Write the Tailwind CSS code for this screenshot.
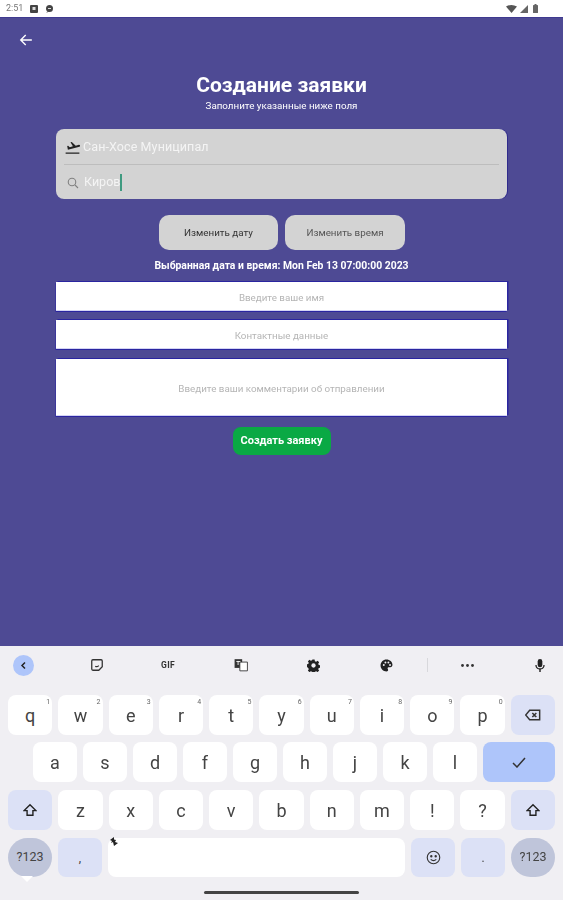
<!DOCTYPE html>
<html lang="ru">
<head>
<meta charset="UTF-8">
<title>Создание заявки</title>
<script src="https://cdn.jsdelivr.net/npm/@tailwindcss/browser@4"></script>
</head>
<body class="h-[900px] w-[563px] overflow-hidden bg-[#f0eff3] font-['Roboto',sans-serif] blur-[0.4px]">
    <!-- Status bar -->
    <div class="flex h-[17px] items-center justify-between bg-white pl-[6px] pr-[25px]">
        <div class="flex items-center gap-[7px]">
            <span class="text-[9px] text-[#777]">2:51</span>
            <svg class="w-[8px] h-[8px]" viewBox="0 0 8 8"><rect width="8" height="8" rx="1" fill="#444"/><rect x="2.5" y="2" width="3" height="3" fill="#ddd"/></svg>
            <svg class="w-[9px] h-[8px]" viewBox="0 0 9 8"><circle cx="4.5" cy="3.5" r="3.5" fill="#444"/><path d="M1 8l2-2h2z" fill="#444"/><rect x="3" y="3" width="3" height="1" fill="#ddd"/></svg>
        </div>
        <div class="flex items-center gap-[3px]">
            <svg class="w-[11px] h-[8px]" viewBox="0 0 11 8"><path d="M0 1.5Q5.5-1.5 11 1.5L5.5 8z" fill="#555"/></svg>
            <svg class="w-[8px] h-[8px]" viewBox="0 0 8 8"><path d="M8 0v8H0z" fill="#666"/></svg>
            <svg class="ml-[2px] w-[5px] h-[9px]" viewBox="0 0 5 9"><rect y="1" width="5" height="8" rx=".6" fill="#666"/><rect x="1.5" width="2" height="1" fill="#666"/></svg>
        </div>
    </div>

    <!-- Form screen -->
    <div class="h-[629px] border-t border-[#3f3a90] bg-[#4e4a94]">
        <div class="pl-[19px] pt-[15px]">
            <svg class="w-[14px] h-[14px] block" viewBox="0 0 24 24" fill="none" stroke="white" stroke-width="2.4"><path d="M22 12H3M11.5 3.5 3 12l8.5 8.5"/></svg>
        </div>
        <h1 class="mt-[25px] text-center text-[21px] leading-[26px] font-bold text-white">Создание заявки</h1>
        <p class="mt-[2px] text-center text-[9.8px] leading-[12px] text-white">Заполните указанные ниже поля</p>

        <div class="mx-[56px] mt-[17px] h-[70px] rounded-[8px] bg-[#d3d3d3] px-[8px] shadow-[1px_0_0_#2f2a8c]">
            <div class="flex h-[36px] items-center border-b border-[#bdbdbd] pt-[2px]">
                <svg class="ml-[1px] w-[15px] h-[15px]" viewBox="0 0 24 24" fill="#222"><path d="M1 20h22v2H1zM3.5 9.5l1.5-.4 2.6 2.3 5-1.3-3.8-6.6 2-.5 6.4 6 5-1.3c.9-.2 1.7.3 2 1.1.2.9-.3 1.7-1.1 2L4.6 15.600z"/></svg>
                <span class="ml-[3px] text-[12.5px] tracking-[.1px] text-[#f4f4f4]">Сан-Хосе Муниципал</span>
            </div>
            <div class="flex h-[33px] items-center pt-[2px]">
                <svg class="ml-[3px] w-[12px] h-[12px]" viewBox="0 0 24 24" fill="none" stroke="#808080" stroke-width="2.2"><circle cx="10" cy="10" r="7.500"/><path d="m16 16 6 6"/></svg>
                <span class="ml-[5px] text-[12.5px] text-[#f4f4f4]">Киров</span>
                <span class="h-[17px] w-[1.5px] bg-[#3f9a80]"></span>
            </div>
        </div>

        <div class="mt-[16px] flex justify-center gap-[7px] pl-[1px]">
            <button class="h-[35px] w-[119px] rounded-[10px] bg-[#d3d3d3] pt-[2px] text-[9.8px] text-[#333]">Изменить дату</button>
            <button class="h-[35px] w-[120px] rounded-[10px] bg-[#d3d3d3] pt-[2px] text-[9.8px] text-[#555]">Изменить время</button>
        </div>
        <p class="mt-[10px] text-center text-[10.4px] leading-[12px] font-bold text-white">Выбранная дата и время: Mon Feb 13 07:00:00 2023</p>

        <div class="mx-[56px] mt-[10px] flex flex-col">
            <div class="flex h-[29px] items-center justify-center bg-white pt-[3px] text-[9.8px] text-[#b5b5b5] shadow-[1.500px_-1px_0_#2a25a0,-0.500px_1px_0_#2a25a0,inset_0_-1px_0_#d4d4f4]">Введите ваше имя</div>
            <div class="mt-[9px] flex h-[29px] items-center justify-center bg-white pt-[4px] text-[9.8px] text-[#b5b5b5] shadow-[1.500px_-1px_0_#2a25a0,-0.500px_1px_0_#2a25a0,inset_0_-1px_0_#d4d4f4]">Контактные данные</div>
            <div class="mt-[10px] flex h-[57px] items-center justify-center bg-white pt-[3px] text-[9.8px] text-[#b5b5b5] shadow-[1.500px_-1px_0_#2a25a0,-0.500px_1px_0_#2a25a0,inset_0_-1px_0_#d4d4f4]">Введите ваши комментарии об отправлении</div>
        </div>

        <div class="mt-[11px] flex justify-center">
            <button class="h-[28px] w-[98px] rounded-[8px] bg-[#0aa944] text-[11px] font-bold text-white">Создать заявку</button>
        </div>
    </div>

    <!-- Keyboard toolbar -->
    <div class="relative flex h-[49px] items-center px-[13px] pb-[11px]">
        <div class="flex h-[21px] w-[21px] items-center justify-center rounded-full bg-[#aec5fa]">
            <svg class="w-[9px] h-[9px]" viewBox="0 0 24 24" fill="none" stroke="#222" stroke-width="4"><path d="M16 4 8 12l8 8"/></svg>
        </div>
        <svg class="ml-[56px] w-[14px] h-[14px]" viewBox="0 0 24 24" fill="none" stroke="#333" stroke-width="2.2"><path d="M5 3h14a2 2 0 0 1 2 2v10l-6 6H5a2 2 0 0 1-2-2V5a2 2 0 0 1 2-2zM9 14q3 2 6-1"/></svg>
        <span class="ml-[57px] text-[8.5px] font-bold tracking-[.4px] text-[#333]">GIF</span>
        <svg class="ml-[59px] w-[14px] h-[14px]" viewBox="0 0 24 24"><path d="M1 2h13v15H1z" fill="#333"/><path d="M10 7h13v15H10z" fill="#fff" stroke="#333" stroke-width="1.5"/><path d="M4 6h7M7 5v7" stroke="#fff" stroke-width="1.500"/></svg>
        <svg class="ml-[59px] w-[13px] h-[13px]" viewBox="0 0 24 24"><path d="M10 1h4l.6 3.100 2.300 1 2.700-1.700 2.800 2.800-1.700 2.700 1 2.300 3.100.6v4l-3.100.6-1 2.300 1.700 2.700-2.800 2.800-2.700-1.700-2.300 1-.6 3.100h-4l-.6-3.100-2.300-1-2.700 1.700-2.800-2.800 1.700-2.700-1-2.300L-.8 14v-4l3.100-.6 1-2.300L1.600 4.400l2.800-2.800 2.700 1.700 2.300-1z" fill="#222"/><circle cx="12" cy="12" r="4" fill="#f0eff3"/></svg>
        <svg class="ml-[60px] w-[13px] h-[13px]" viewBox="0 0 24 24"><path d="M12 1C5.500 1 1 6 1 12s5 11 11 11c2 0 3-1.200 3-2.700 0-1.800-1-2-1-3.300 0-1.200 1-2 2.200-2H19c2.500 0 4-2 4-4.500C23 5.500 18 1 12 1z" fill="#222"/><circle cx="7" cy="11" r="1.800" fill="#f0eff3"/><circle cx="10" cy="6.500" r="1.800" fill="#f0eff3"/><circle cx="15.500" cy="6.500" r="1.800" fill="#f0eff3"/><circle cx="18.500" cy="11" r="1.800" fill="#f0eff3"/></svg>
        <span class="ml-[34px] h-[14px] w-px bg-[#d8d8dc]"></span>
        <svg class="ml-[33px] w-[13px] h-[3px]" viewBox="0 0 13 3" fill="#333"><circle cx="1.500" cy="1.500" r="1.400"/><circle cx="6.500" cy="1.500" r="1.400"/><circle cx="11.500" cy="1.500" r="1.400"/></svg>
        <svg class="ml-[59px] w-[14px] h-[15px]" viewBox="0 0 24 24" fill="#222"><rect x="8" y="1" width="8" height="14" rx="4"/><path d="M4 11h2.200a5.800 5.800 0 0 0 11.600 0H20a8 8 0 0 1-6.800 7.800V23h-2.400v-4.200A8 8 0 0 1 4 11z"/></svg>
    </div>

    <!-- Keys -->
    <div class="flex flex-col px-[8px] text-[#444]">
        <div class="flex h-[40px] gap-[6px] text-[18px]">
            <div class="relative flex flex-1 items-center justify-center rounded-[8px] bg-white">q<span class="absolute right-[2px] top-[2px] text-[7px] text-[#666]">1</span></div>
            <div class="relative flex flex-1 items-center justify-center rounded-[8px] bg-white">w<span class="absolute right-[2px] top-[2px] text-[7px] text-[#666]">2</span></div>
            <div class="relative flex flex-1 items-center justify-center rounded-[8px] bg-white">e<span class="absolute right-[2px] top-[2px] text-[7px] text-[#666]">3</span></div>
            <div class="relative flex flex-1 items-center justify-center rounded-[8px] bg-white">r<span class="absolute right-[2px] top-[2px] text-[7px] text-[#666]">4</span></div>
            <div class="relative flex flex-1 items-center justify-center rounded-[8px] bg-white">t<span class="absolute right-[2px] top-[2px] text-[7px] text-[#666]">5</span></div>
            <div class="relative flex flex-1 items-center justify-center rounded-[8px] bg-white">y<span class="absolute right-[2px] top-[2px] text-[7px] text-[#666]">6</span></div>
            <div class="relative flex flex-1 items-center justify-center rounded-[8px] bg-white">u<span class="absolute right-[2px] top-[2px] text-[7px] text-[#666]">7</span></div>
            <div class="relative flex flex-1 items-center justify-center rounded-[8px] bg-white">i<span class="absolute right-[2px] top-[2px] text-[7px] text-[#666]">8</span></div>
            <div class="relative flex flex-1 items-center justify-center rounded-[8px] bg-white">o<span class="absolute right-[2px] top-[2px] text-[7px] text-[#666]">9</span></div>
            <div class="relative flex flex-1 items-center justify-center rounded-[8px] bg-white">p<span class="absolute right-[2px] top-[2px] text-[7px] text-[#666]">0</span></div>
            <div class="flex flex-1 items-center justify-center rounded-[8px] bg-[#dce1f6]">
                <svg class="w-[16px] h-[12px]" viewBox="0 0 24 18" fill="none" stroke="#333" stroke-width="2.2"><path d="M7 2h15v14H7L1 9zM11 6l6 6M17 6l-6 6"/></svg>
            </div>
        </div>
        <div class="mt-[7px] flex h-[40px] gap-[6px] pl-[25px] text-[18px]">
            <div class="flex w-[44px] items-center justify-center rounded-[8px] bg-white">a</div>
            <div class="flex w-[44px] items-center justify-center rounded-[8px] bg-white">s</div>
            <div class="flex w-[44px] items-center justify-center rounded-[8px] bg-white">d</div>
            <div class="flex w-[44px] items-center justify-center rounded-[8px] bg-white">f</div>
            <div class="flex w-[44px] items-center justify-center rounded-[8px] bg-white">g</div>
            <div class="flex w-[44px] items-center justify-center rounded-[8px] bg-white">h</div>
            <div class="flex w-[44px] items-center justify-center rounded-[8px] bg-white">j</div>
            <div class="flex w-[44px] items-center justify-center rounded-[8px] bg-white">k</div>
            <div class="flex w-[44px] items-center justify-center rounded-[8px] bg-white">l</div>
            <div class="flex flex-1 items-center justify-center rounded-[8px] bg-[#aec5fa]">
                <svg class="w-[14px] h-[11px]" viewBox="0 0 14 11" fill="none" stroke="#333" stroke-width="1.500"><path d="m1 6 4 4 8-9"/></svg>
            </div>
        </div>
        <div class="mt-[8px] flex h-[40px] gap-[6px] text-[18px]">
            <div class="flex flex-1 items-center justify-center rounded-[8px] bg-[#dce1f6]">
                <svg class="w-[14px] h-[14px]" viewBox="0 0 24 24" fill="none" stroke="#222" stroke-width="2.400"><path d="M12 3 2 13h5v8h10v-8h5z"/></svg>
            </div>
            <div class="flex flex-1 items-center justify-center rounded-[8px] bg-white">z</div>
            <div class="flex flex-1 items-center justify-center rounded-[8px] bg-white">x</div>
            <div class="flex flex-1 items-center justify-center rounded-[8px] bg-white">c</div>
            <div class="flex flex-1 items-center justify-center rounded-[8px] bg-white">v</div>
            <div class="flex flex-1 items-center justify-center rounded-[8px] bg-white">b</div>
            <div class="flex flex-1 items-center justify-center rounded-[8px] bg-white">n</div>
            <div class="flex flex-1 items-center justify-center rounded-[8px] bg-white">m</div>
            <div class="flex flex-1 items-center justify-center rounded-[8px] bg-white">!</div>
            <div class="flex flex-1 items-center justify-center rounded-[8px] bg-white">?</div>
            <div class="flex flex-1 items-center justify-center rounded-[8px] bg-[#dce1f6]">
                <svg class="w-[14px] h-[14px]" viewBox="0 0 24 24" fill="none" stroke="#222" stroke-width="2.400"><path d="M12 3 2 13h5v8h10v-8h5z"/></svg>
            </div>
        </div>
        <div class="relative mt-[8px] flex h-[39px] gap-[6px] text-[14px]">
            <div class="flex w-[44px] items-center justify-center rounded-[20px] bg-[#bfc5da] text-[12.5px]">?123</div>
            <div class="flex w-[44px] items-center justify-center rounded-[8px] bg-[#dce1f6] text-[12px]">,</div>
            <div class="relative flex-1 rounded-[8px] bg-white">
                <svg class="absolute -top-[1px] left-[1px] w-[10px] h-[10px]" viewBox="0 0 10 10" fill="#222"><path d="M5 0 1 3l2 1-1 2 2-1 1 4 4-3-3-1 1-2-2-.5z"/></svg>
            </div>
            <div class="flex w-[44px] items-center justify-center rounded-[8px] bg-[#dce1f6]">
                <svg class="w-[15px] h-[15px]" viewBox="0 0 24 24" fill="none" stroke="#333" stroke-width="1.800"><circle cx="12" cy="12" r="10"/><circle cx="8.500" cy="10" r="1" fill="#333"/><circle cx="15.500" cy="10" r="1" fill="#333"/><path d="M7.500 15q4.500 4 9 0"/></svg>
            </div>
            <div class="flex w-[44px] items-center justify-center rounded-[8px] bg-[#dce1f6] text-[12px]">.</div>
            <div class="flex w-[44px] items-center justify-center rounded-[20px] bg-[#bfc5da] text-[12.5px]">?123</div>
        </div>
    </div>

    <!-- Navigation -->
    <div class="relative mt-[14px] flex justify-center">
        <div class="absolute -top-[15px] left-[21px] h-0 w-0 border-x-[6px] border-t-[6px] border-x-transparent border-t-white"></div>
        <div class="h-[3px] w-[155px] rounded-full bg-[#444]"></div>
    </div>
</body>
</html>
